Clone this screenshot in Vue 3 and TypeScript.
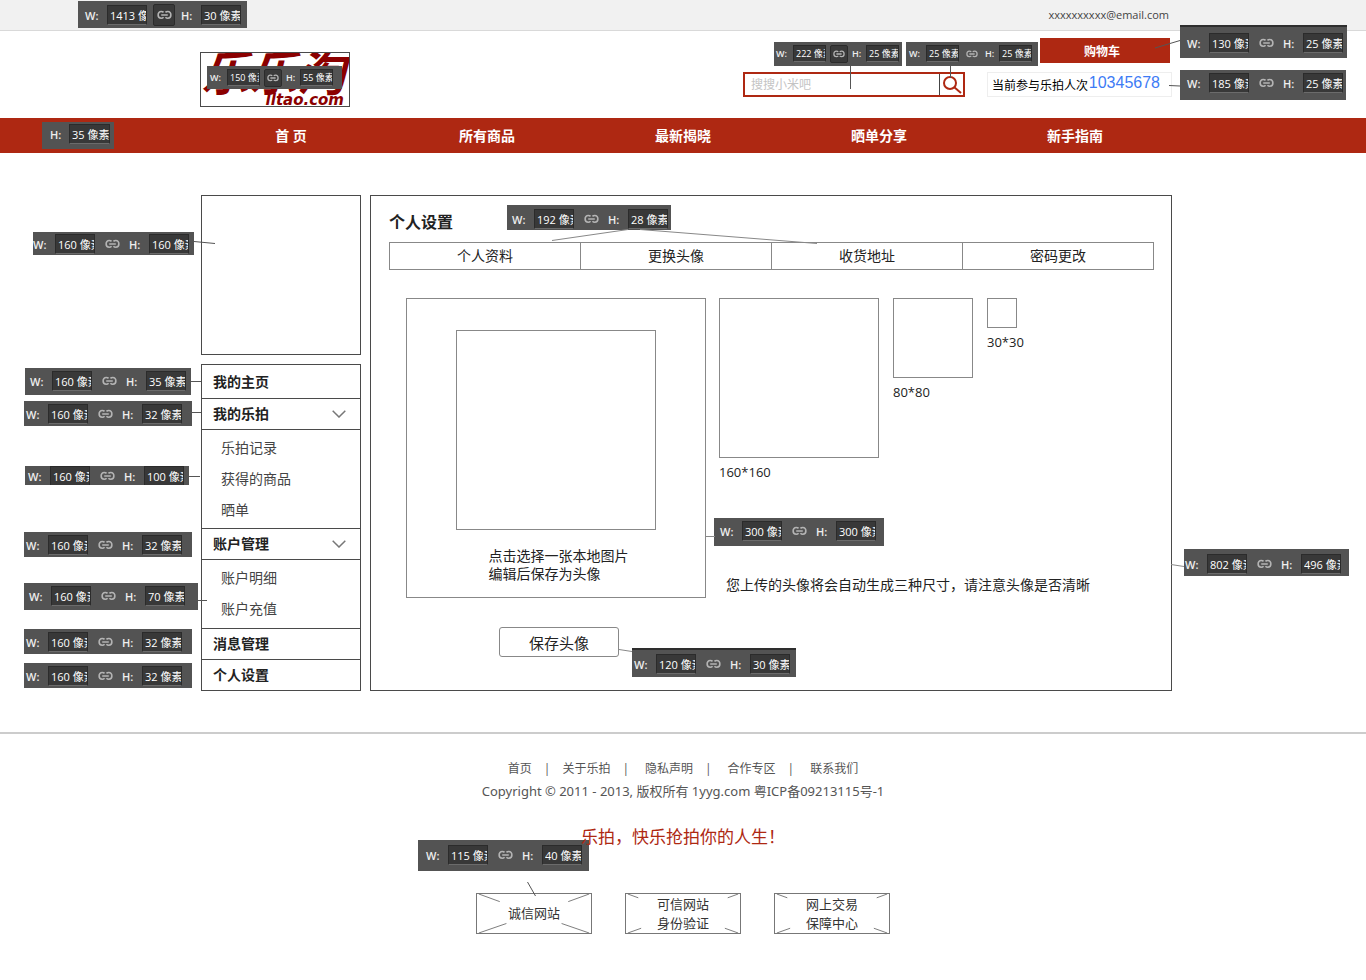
<script setup lang="ts">
import { ref } from 'vue'

interface Note {
  x: number
  y: number
  w: number
  h: number
  padX: number
  padY: number
  width?: string
  height: string
  small?: boolean
  pressed?: boolean
  edge?: boolean
}

interface MenuGroup {
  label: string
  tall?: boolean
  children?: string[]
}

const keyword = ref('')

const navItems: string[] = ['首 页', '所有商品', '最新揭晓', '晒单分享', '新手指南']

const menu: MenuGroup[] = [
  { label: '我的主页', tall: true },
  { label: '我的乐拍', children: ['乐拍记录', '获得的商品', '晒单'] },
  { label: '账户管理', children: ['账户明细', '账户充值'] },
  { label: '消息管理' },
  { label: '个人设置' },
]

const tabs: string[] = ['个人资料', '更换头像', '收货地址', '密码更改']

const previews = [
  { size: 160, name: 'large' },
  { size: 80, name: 'medium' },
  { size: 30, name: 'small' },
]

const footerLinks: string[] = ['首页', '关于乐拍', '隐私声明', '合作专区', '联系我们']

const badges = [
  { lines: ['诚信网站'], d: 'M0 0L22 8M116 0L94 8M0 41L29 31M116 41L87 31' },
  { lines: ['可信网站', '身份验证'], d: 'M0 0L11 4M116 0L105 4M0 41L14 36M116 41L102 36' },
  { lines: ['网上交易', '保障中心'], d: 'M0 0L11 4M116 0L105 4M0 41L14 36M116 41L102 36' },
]

const notes: Note[] = [
  { x: 78, y: 1, w: 169, h: 27, padX: 7, padY: 4, width: '1413', height: '30', pressed: true },
  { x: 207, y: 66, w: 135, h: 23, padX: 3, padY: 3, width: '150', height: '55', small: true, pressed: true },
  { x: 774, y: 42, w: 128, h: 24, padX: 2, padY: 3, width: '222', height: '25', small: true, pressed: true },
  { x: 906, y: 42, w: 132, h: 24, padX: 3, padY: 3, width: '25', height: '25', small: true },
  { x: 1180, y: 25, w: 167, h: 33, padX: 7, padY: 6, width: '130', height: '25', edge: true },
  { x: 1180, y: 70, w: 166, h: 30, padX: 7, padY: 3, width: '185', height: '25' },
  { x: 42, y: 122, w: 72, h: 27, padX: 8, padY: 2, height: '35' },
  { x: 33, y: 232, w: 161, h: 23, padX: 0, padY: 2, width: '160', height: '160' },
  { x: 25, y: 368, w: 166, h: 27, padX: 5, padY: 3, width: '160', height: '35' },
  { x: 24, y: 401, w: 168, h: 25, padX: 2, padY: 3, width: '160', height: '32' },
  { x: 25, y: 466, w: 164, h: 19, padX: 3, padY: 0, width: '160', height: '100' },
  { x: 24, y: 532, w: 168, h: 25, padX: 2, padY: 3, width: '160', height: '32' },
  { x: 24, y: 583, w: 174, h: 27, padX: 5, padY: 3, width: '160', height: '70' },
  { x: 24, y: 629, w: 168, h: 25, padX: 2, padY: 3, width: '160', height: '32' },
  { x: 24, y: 663, w: 168, h: 25, padX: 2, padY: 3, width: '160', height: '32' },
  { x: 507, y: 205, w: 164, h: 25, padX: 5, padY: 4, width: '192', height: '28' },
  { x: 714, y: 518, w: 170, h: 28, padX: 6, padY: 3, width: '300', height: '300' },
  { x: 632, y: 648, w: 164, h: 29, padX: 2, padY: 4, width: '120', height: '30', edge: true },
  { x: 1184, y: 549, w: 165, h: 27, padX: 1, padY: 5, width: '802', height: '496' },
  { x: 418, y: 840, w: 171, h: 31, padX: 8, padY: 5, width: '115', height: '40' },
]

function noteStyle(n: Note) {
  return {
    left: `${n.x}px`,
    top: `${n.y}px`,
    width: `${n.w}px`,
    height: `${n.h}px`,
    padding: `${n.padY}px 0 0 ${n.padX}px`,
  }
}
</script>

<template>
  <div class="page">
    <div class="topbar">
      <div class="wrap topbar-inner">
        <a href="#" class="email">xxxxxxxxxx@email.com</a>
      </div>
    </div>

    <header class="header">
      <div class="wrap header-inner">
        <a href="#" class="logo" aria-label="乐乐淘 lltao.com">
          <span class="logo-name">乐乐淘</span>
          <span class="logo-domain">lltao.com</span>
        </a>
        <div class="header-tools">
          <form class="search" @submit.prevent>
            <input v-model="keyword" type="text" class="search-input" placeholder="搜搜小米吧" aria-label="搜索" />
            <button type="submit" class="search-btn" aria-label="搜索">
              <svg width="20" height="20" viewBox="0 0 20 20" aria-hidden="true">
                <circle cx="8" cy="8" r="6" fill="none" stroke="#ae2812" stroke-width="2" />
                <path d="M12 12L19 18" stroke="#ae2812" stroke-width="2" fill="none" />
              </svg>
            </button>
          </form>
          <div class="header-side">
            <button type="button" class="cart">购物车</button>
            <p class="count">当前参与乐拍人次 <strong>10345678</strong></p>
          </div>
        </div>
      </div>
    </header>

    <nav class="nav" aria-label="主导航">
      <ul class="nav-list">
        <li v-for="item in navItems" :key="item"><a href="#">{{ item }}</a></li>
      </ul>
    </nav>

    <main class="wrap main">
      <aside class="side">
        <div class="avatar"></div>
        <ul class="menu">
          <li v-for="group in menu" :key="group.label" class="menu-group">
            <button v-if="group.children" type="button" class="menu-head" aria-expanded="true">
              {{ group.label }}
              <svg width="14" height="8" viewBox="0 0 14 8" aria-hidden="true">
                <path d="M0.700 0.700L7 7L13.300 0.700" fill="none" stroke="#777" stroke-width="1.500" />
              </svg>
            </button>
            <a v-else href="#" class="menu-head" :class="{ tall: group.tall }">{{ group.label }}</a>
            <ul v-if="group.children" class="submenu">
              <li v-for="child in group.children" :key="child"><a href="#">{{ child }}</a></li>
            </ul>
          </li>
        </ul>
      </aside>

      <section class="panel">
        <h1 class="panel-title">个人设置</h1>
        <ul class="tabs">
          <li v-for="tab in tabs" :key="tab"><a href="#">{{ tab }}</a></li>
        </ul>
        <div class="editor">
          <label class="upload">
            <input type="file" accept="image/*" class="file" />
            <span class="upload-area"></span>
            <span class="upload-hint">点击选择一张本地图片<br />编辑后保存为头像</span>
          </label>
          <div class="editor-side">
            <div class="previews">
              <figure v-for="p in previews" :key="p.size" class="preview">
                <div class="preview-box" :class="p.name"></div>
                <figcaption>{{ p.size }}*{{ p.size }}</figcaption>
              </figure>
            </div>
            <p class="tip">您上传的头像将会自动生成三种尺寸，请注意头像是否清晰</p>
          </div>
        </div>
        <button type="button" class="save">保存头像</button>
      </section>
    </main>

    <footer class="footer">
      <ul class="footer-links">
        <li v-for="item in footerLinks" :key="item"><a href="#">{{ item }}</a></li>
      </ul>
      <p class="copyright">Copyright © 2011 - 2013, 版权所有 1yyg.com 粤ICP备09213115号-1</p>
      <p class="slogan">乐拍，快乐抢拍你的人生！</p>
      <div class="badges">
        <a v-for="badge in badges" :key="badge.lines[0]" href="#" class="badge">
          <svg class="badge-lines" viewBox="0 0 116 41" aria-hidden="true">
            <path :d="badge.d" fill="none" stroke="#777" stroke-width="1" />
          </svg>
          <span v-for="line in badge.lines" :key="line">{{ line }}</span>
        </a>
      </div>
    </footer>

    <div class="notes">
      <div
        v-for="(n, i) in notes"
        :key="i"
        class="note"
        :class="{ small: n.small, edge: n.edge, single: !n.width }"
        :style="noteStyle(n)"
      >
        <template v-if="n.width">
          <label :for="`note-w-${i}`">W:</label>
          <input :id="`note-w-${i}`" type="text" readonly :value="`${n.width} 像素`" />
          <button type="button" class="chain" :class="{ pressed: n.pressed }" aria-label="锁定比例">
            <svg viewBox="0 0 16 10" aria-hidden="true">
              <path
                d="M7 2.200C6.200 1.300 5.300 1.200 4.500 1.200C2.400 1.200 1.200 2.800 1.200 5C1.200 7.200 2.400 8.500 4.500 8.500C5.300 8.500 6.200 8.400 7 7.500M9 2.200C9.800 1.300 10.700 1.200 11.500 1.200C13.600 1.200 14.800 2.800 14.800 5C14.800 7.200 13.600 8.500 11.500 8.500C10.700 8.500 9.800 8.400 9 7.500M4.500 5H11.500"
                fill="none"
                stroke="#b4b4b4"
                stroke-width="1.700"
              />
            </svg>
          </button>
        </template>
        <label :for="`note-h-${i}`">H:</label>
        <input :id="`note-h-${i}`" type="text" readonly :value="`${n.height} 像素`" />
      </div>
      <svg class="leaders" width="1" height="1" aria-hidden="true">
        <g fill="none" stroke="#555" stroke-width="1">
          <path d="M850.500 66V89M950.500 66V78" />
          <path d="M1155 48L1180 40.500M1169 85.500L1180 86" />
          <path d="M194 241.500L215 243.500M191 381.500H201M188 412.500H201M189 476.500H200M198 600.500H207" />
          <path d="M527.500 882L535.500 896" />
        </g>
        <g fill="none" stroke="#888" stroke-width="1">
          <path d="M552 240.500L628 229.500M640 229.500L817 243.500M706 536.500H715M619 649.500L632 651.500M1171 564.500L1184 566.500" />
        </g>
      </svg>
    </div>
  </div>
</template>

<style>
body {
  margin: 0;
  background: #fff;
}
</style>

<style scoped>
.page {
  position: relative;
  overflow: hidden;
  min-height: 100vh;
  color: #222;
  background: #fff;
  font-family: "Open Sans", "Noto Sans CJK SC", sans-serif;
  font-size: 14px;
}

.page *,
.page *::before {
  box-sizing: border-box;
}

ul,
p,
h1,
figure {
  margin: 0;
  padding: 0;
  list-style: none;
}

a {
  color: inherit;
  text-decoration: none;
}

button,
input {
  font-family: inherit;
  color: inherit;
}

.wrap {
  max-width: 972px;
  margin: 0 auto;
  position: relative;
  left: 3px;
}

.topbar {
  height: 31px;
  background: #f1f1f1;
  border-bottom: 1px solid #d9d9d9;
}

.topbar-inner {
  display: flex;
  justify-content: flex-end;
  padding-right: 3px;
}

.email {
  font-size: 11px;
  line-height: 30px;
  color: #444;
}

.header-inner {
  display: flex;
  justify-content: space-between;
  align-items: flex-start;
  min-height: 87px;
  padding-top: 7px;
}

.logo {
  display: flex;
  flex-direction: column;
  align-items: flex-end;
  width: 150px;
  height: 55px;
  margin-top: 14px;
  overflow: hidden;
  border: 1px solid #4a4a4a;
  color: #8b0000;
  font-weight: bold;
  font-style: italic;
}

.logo-name {
  align-self: flex-start;
  font-size: 48px;
  line-height: 40px;
  white-space: nowrap;
}

.logo-domain {
  padding-right: 5px;
  font-family: "DejaVu Sans", sans-serif;
  font-size: 15px;
  line-height: 14px;
}

.header-tools {
  display: flex;
  align-items: flex-end;
  gap: 22px;
}

.search {
  display: flex;
  width: 222px;
  height: 25px;
  border: 2px solid #ae2812;
}

.search-input {
  flex: 1;
  min-width: 0;
  padding: 0 6px;
  border: 0;
  outline: 0;
  background: transparent;
  font-size: 12px;
}

.search-input::placeholder {
  color: #c4c4c4;
  opacity: 1;
}

.search-btn {
  display: flex;
  align-items: center;
  justify-content: center;
  width: 24px;
  padding: 0;
  border: 0;
  border-left: 1px solid #444;
  background: transparent;
}

.header-side {
  display: flex;
  flex-direction: column;
  align-items: flex-end;
  gap: 9px;
}

.cart {
  width: 130px;
  height: 25px;
  margin-right: 2px;
  padding: 0 6px 0 0;
  border: 0;
  background: #ae2812;
  color: #fff;
  font-size: 12px;
  font-weight: bold;
}

.count {
  display: flex;
  justify-content: space-between;
  align-items: center;
  width: 185px;
  height: 25px;
  padding: 0 11px 0 4px;
  border: 1px solid #eee;
  color: #000;
  font-size: 12px;
  white-space: nowrap;
}

.count strong {
  color: #3d7bf5;
  font-family: "Liberation Sans", sans-serif;
  font-size: 16px;
  font-weight: normal;
  line-height: 20px;
  align-self: flex-start;
}

.nav {
  background: #ae2812;
}

.nav-list {
  display: grid;
  grid-template-columns: repeat(5, 1fr);
  max-width: 980px;
  margin: 0 auto;
  color: #fff;
  font-weight: bold;
  line-height: 35px;
  text-align: center;
}

.main {
  display: grid;
  grid-template-columns: 160px 1fr;
  gap: 9px;
  align-items: start;
  padding: 42px 0 41px 1px;
}

.side {
  display: flex;
  flex-direction: column;
  gap: 9px;
}

.avatar {
  height: 160px;
  border: 1px solid #4a4a4a;
}

.menu {
  border: 1px solid #4a4a4a;
}

.menu-group + .menu-group {
  border-top: 1px solid #4a4a4a;
}

.menu-head {
  display: flex;
  align-items: center;
  justify-content: space-between;
  width: 100%;
  height: 30px;
  padding: 0 14px 2px 11px;
  border: 0;
  background: transparent;
  font-size: 14px;
  font-weight: bold;
}

.menu-head svg {
  position: relative;
  top: 1px;
}

.menu-head.tall {
  height: 33px;
}

.submenu {
  min-height: 69px;
  padding: 2px 0 3px 19px;
  border-top: 1px solid #4a4a4a;
  color: #444;
  line-height: 31px;
}

.panel {
  min-height: 496px;
  padding: 12px 17px 33px 18px;
  border: 1px solid #4a4a4a;
}

.panel-title {
  font-size: 16px;
  font-weight: bold;
  line-height: 28px;
  padding-bottom: 6px;
}

.tabs {
  display: grid;
  grid-template-columns: repeat(4, 1fr);
  border: 1px solid #888;
  border-right: 0;
  line-height: 26px;
  text-align: center;
}

.tabs li {
  border-right: 1px solid #888;
}

.tabs a {
  display: block;
}

.editor {
  display: flex;
  gap: 13px;
  padding: 28px 0 0 17px;
}

.upload {
  display: flex;
  flex-direction: column;
  align-items: center;
  flex: none;
  width: 300px;
  height: 300px;
  padding-top: 31px;
  border: 1px solid #888;
}

.file {
  position: absolute;
  width: 1px;
  height: 1px;
  opacity: 0;
}

.upload-area {
  width: 200px;
  height: 200px;
  border: 1px solid #888;
}

.upload-hint {
  margin-top: 17px;
  padding-left: 5px;
  line-height: 18px;
}

.editor-side {
  display: flex;
  flex-direction: column;
  justify-content: space-between;
}

.previews {
  display: flex;
  align-items: flex-start;
  gap: 14px;
}

.preview-box {
  border: 1px solid #888;
}

.preview-box.large {
  width: 160px;
  height: 160px;
}

.preview-box.medium {
  width: 80px;
  height: 80px;
}

.preview-box.small {
  width: 30px;
  height: 30px;
}

.preview figcaption {
  margin-top: 4px;
  font-size: 13px;
  line-height: 20px;
}

.tip {
  padding-left: 7px;
  line-height: 26px;
}

.save {
  display: block;
  width: 120px;
  height: 30px;
  margin: 29px 0 0 110px;
  padding: 0;
  border: 1px solid #888;
  border-radius: 3px;
  background: #fff;
  font-size: 15px;
}

.footer {
  display: flex;
  flex-direction: column;
  align-items: center;
  border-top: 2px solid #ccc;
  padding: 24px 0 46px;
  color: #555;
}

.footer-links {
  display: flex;
  font-size: 12px;
  line-height: 22px;
}

.footer-links li + li::before {
  content: "|";
  margin: 0 16px 0 12px;
}

.footer-links li:nth-child(2)::before {
  margin-right: 12px;
}

.copyright {
  font-family: "Noto Sans", "Noto Sans CJK SC", sans-serif;
  font-size: 13px;
  line-height: 22px;
}

.slogan {
  position: relative;
  z-index: 2;
  padding-top: 22px;
  color: #ae2812;
  font-size: 17px;
  line-height: 26px;
}

.badges {
  display: flex;
  gap: 33px;
  padding-top: 43px;
}

.badge {
  position: relative;
  display: flex;
  flex-direction: column;
  align-items: center;
  justify-content: center;
  width: 116px;
  height: 41px;
  border: 1px solid #777;
  color: #333;
  font-size: 13px;
  line-height: 19px;
}

.badge-lines {
  position: absolute;
  inset: 0;
  width: 100%;
  height: 100%;
}

.notes {
  position: absolute;
  top: 0;
  left: 50%;
  width: 1366px;
  margin-left: -683px;
}

.note {
  position: absolute;
  display: grid;
  grid-template-columns: 22px 40px 34px 20px 40px;
  grid-template-rows: 20px;
  align-items: center;
  overflow: hidden;
  background: #535353;
  color: #eee;
  font-size: 11px;
}

.note.single {
  grid-template-columns: 19px 41px;
}

.note.edge {
  border-top: 2px solid #2e2e2e;
}

.note.small {
  grid-template-columns: 17px 33px 26px 14px 33px;
  grid-template-rows: 17px;
  font-size: 9px;
}

.note label {
  font-weight: 600;
}

.note input {
  width: 100%;
  height: 100%;
  min-width: 0;
  padding: 0 0 0 2px;
  border: 1px solid #2b2b2b;
  border-bottom-color: #6b6b6b;
  outline: 0;
  background: #383838;
  color: #fff;
  font-size: inherit;
}

.chain {
  display: flex;
  align-items: center;
  justify-content: center;
  justify-self: center;
  width: 22px;
  height: 22px;
  padding: 0;
  border: 1px solid transparent;
  border-radius: 2px;
  background: transparent;
}

.chain.pressed {
  border-color: #2b2b2b;
  background: #3a3a3a;
}

.chain svg {
  width: 15px;
  height: 10px;
}

.small .chain {
  width: 18px;
  height: 18px;
}

.small .chain svg {
  width: 12px;
  height: 8px;
}

.leaders {
  position: absolute;
  top: 0;
  left: 0;
  overflow: visible;
}
</style>
